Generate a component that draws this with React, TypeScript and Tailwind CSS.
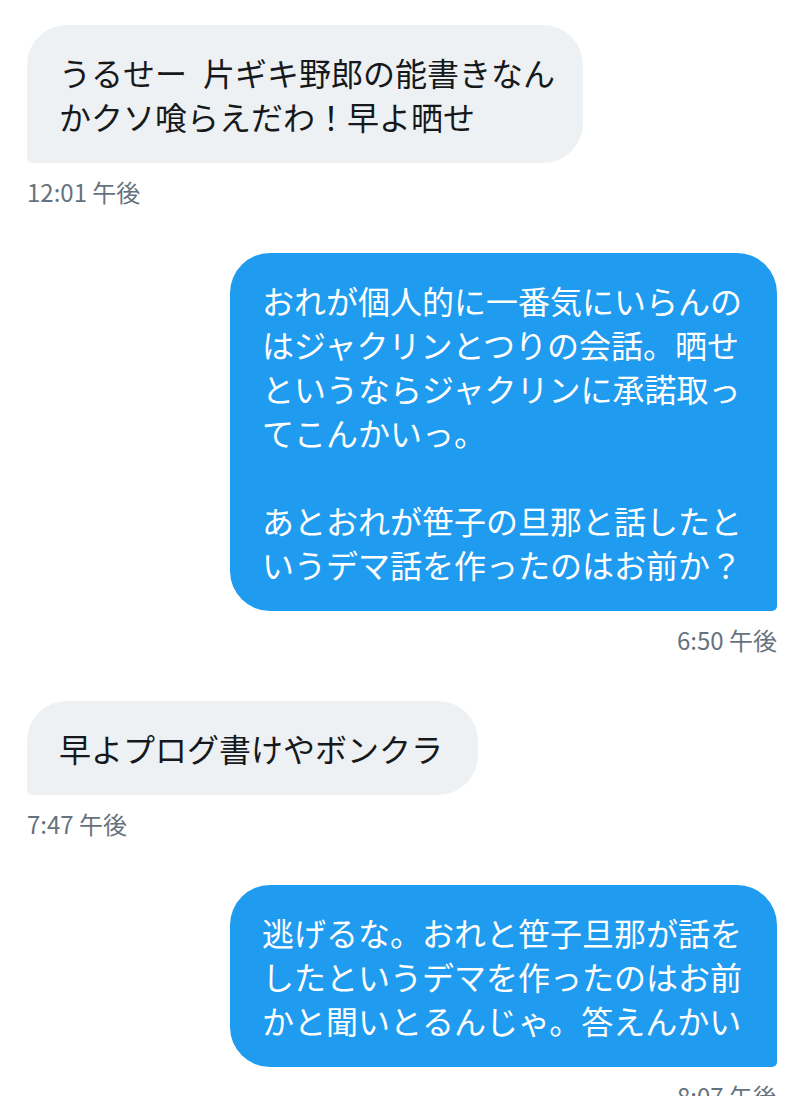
type Message = {
  from: "them" | "me";
  text: string;
  time: string;
  width: string;
};

const messages: Message[] = [
  {
    from: "them",
    text: "うるせー\u2002片ギキ野郎の能書きなん\nかクソ喰らえだわ！早よ晒せ",
    time: "12:01 午後",
    width: "w-[556px]",
  },
  {
    from: "me",
    text: "おれが個人的に一番気にいらんの\nはジャクリンとつりの会話。晒せ\nというならジャクリンに承諾取っ\nてこんかいっ。\n\nあとおれが笹子の旦那と話したと\nいうデマ話を作ったのはお前か？",
    time: "6:50 午後",
    width: "w-[547px]",
  },
  {
    from: "them",
    text: "早よプログ書けやボンクラ",
    time: "7:47 午後",
    width: "w-[451px]",
  },
  {
    from: "me",
    text: "逃げるな。おれと笹子旦那が話を\nしたというデマを作ったのはお前\nかと聞いとるんじゃ。答えんかい",
    time: "8:07 午後",
    width: "w-[547px]",
  },
];

function Bubble({ message }: { message: Message }) {
  const mine = message.from === "me";
  return (
    <div className={`flex flex-col ${mine ? "items-end mr-[31px]" : "items-start ml-[27px]"}`}>
      <div
        className={`${message.width} whitespace-pre rounded-[40px] py-[25px] px-[32px] text-[32px] leading-[44px] ${
          mine ? "rounded-br-[5px] bg-[#1f9bf0] text-white" : "rounded-bl-[5px] bg-[#eef1f3] text-[#16191c]"
        }`}
      >
        {message.text}
      </div>
      <div className="mt-[15px] text-[24px] leading-[28px] text-[#66727d]">{message.time}</div>
    </div>
  );
}

export default function App() {
  return (
    <div
      className="flex h-[1096px] w-[808px] flex-col gap-[47px] overflow-hidden bg-white pt-[25px]"
      style={{ fontFamily: '"Noto Sans CJK JP", "Noto Sans", sans-serif' }}
    >
      {messages.map((m, i) => (
        <Bubble key={i} message={m} />
      ))}
    </div>
  );
}
